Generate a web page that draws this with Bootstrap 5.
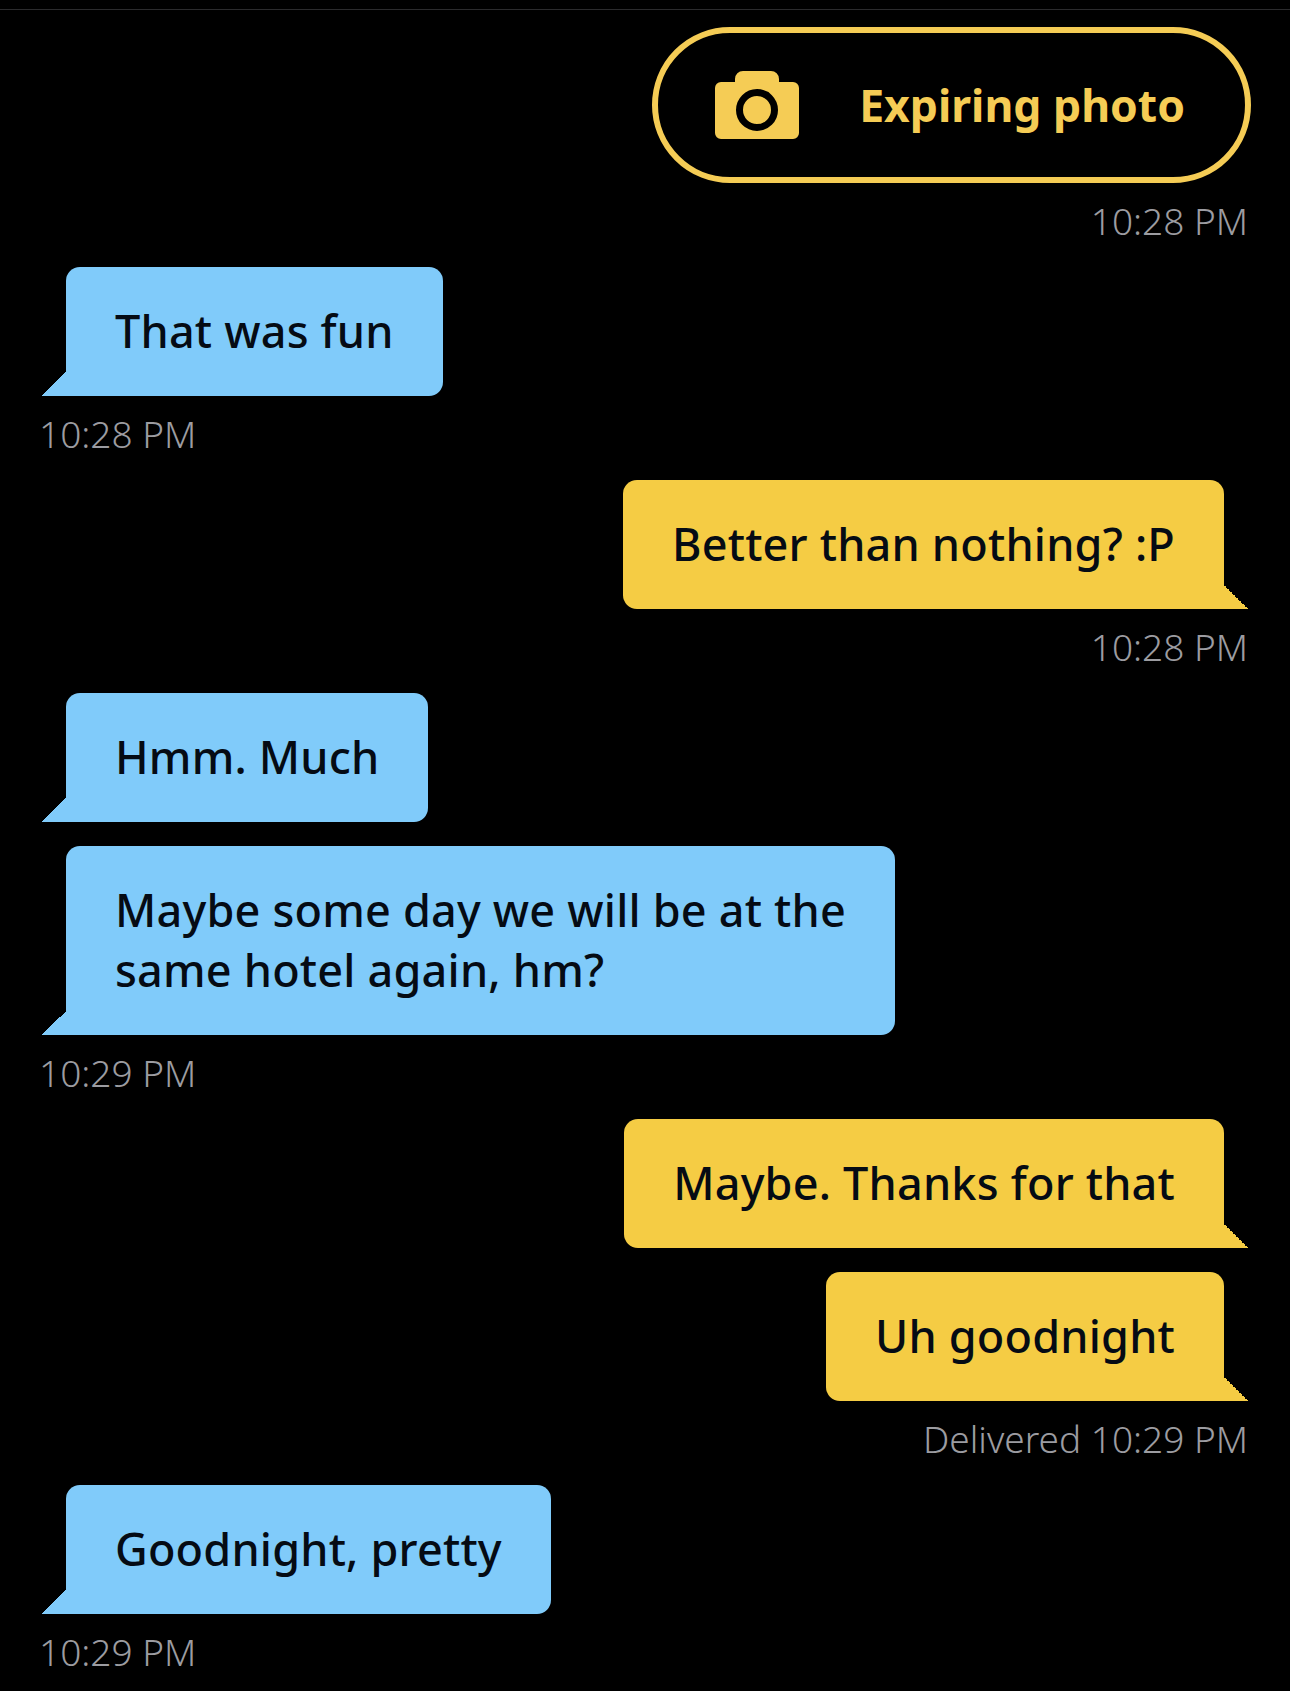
<!DOCTYPE html>
<html lang="en">
<head>
    <meta charset="utf-8">
    <meta name="viewport" content="width=device-width, initial-scale=1.0">
    <title>Chat</title>
    <link href="https://cdn.jsdelivr.net/npm/bootstrap@5.3.0/dist/css/bootstrap.min.css" rel="stylesheet">
    <style>
        body { background: #000; font-family: "Noto Sans", "Liberation Sans", sans-serif; }
        .top-rule { height: 1px; margin-top: 9px; background: #2b2b2d; }
        .thread { padding: 17px 42px 0; }
        .photo-pill { height: 156px; margin-right: -3px; padding: 0 60px 0 57px; gap: 60px; border: 6px solid #f5cc55; color: #f5cc55; font-size: 44.5px; font-weight: 700; }
        .cam-icon { width: 84px; height: 68px; }
        .bubble { position: relative; padding: 34px 49px 35px; font-size: 45px; font-weight: 500; letter-spacing: .2px; line-height: 60px; color: #050b14; border-radius: 14px; }
        .bubble::after { content: ""; position: absolute; bottom: 0; width: 24px; height: 24px; }
        .bubble-in { margin-left: 24px; background: #80cbfa; border-bottom-left-radius: 0; }
        .bubble-in::after { left: -24px; background: linear-gradient(to bottom right, transparent 50%, #80cbfa 50%); }
        .bubble-out { margin-right: 24px; background: #f5cc44; border-bottom-right-radius: 0; }
        .bubble-out::after { right: -24px; background: linear-gradient(to bottom left, transparent 50%, #f5cc44 50%); }
        .gap-same { margin-bottom: 24px; }
        .stamp { margin-top: 16px; margin-bottom: 24px; font-size: 37px; line-height: 44px; font-weight: 300; color: #9c9ca1; }
        .stamp-in { margin-left: -3px; }
    </style>
</head>
<body>
    <div class="top-rule"></div>
    <div class="thread d-flex flex-column">
        <div class="d-flex justify-content-end">
            <div class="photo-pill d-flex align-items-center rounded-pill">
                <svg class="cam-icon" viewBox="0 0 84 68" aria-hidden="true">
                    <path fill="currentColor" d="M20 11V8a8 8 0 0 1 8-8h28a8 8 0 0 1 8 8v3h14a6 6 0 0 1 6 6v45a6 6 0 0 1-6 6H6a6 6 0 0 1-6-6V17a6 6 0 0 1 6-6z"/>
                    <circle cx="42" cy="39" r="17.5" fill="none" stroke="#000" stroke-width="7"/>
                </svg>
                <span>Expiring photo</span>
            </div>
        </div>
        <div class="stamp text-end">10:28 PM</div>

        <div class="d-flex"><div class="bubble bubble-in">That was fun</div></div>
        <div class="stamp stamp-in">10:28 PM</div>

        <div class="d-flex justify-content-end"><div class="bubble bubble-out">Better than nothing? :P</div></div>
        <div class="stamp text-end">10:28 PM</div>

        <div class="d-flex gap-same"><div class="bubble bubble-in">Hmm. Much</div></div>
        <div class="d-flex"><div class="bubble bubble-in">Maybe some day we will be at the<br>same hotel again, hm?</div></div>
        <div class="stamp stamp-in">10:29 PM</div>

        <div class="d-flex justify-content-end gap-same"><div class="bubble bubble-out">Maybe. Thanks for that</div></div>
        <div class="d-flex justify-content-end"><div class="bubble bubble-out">Uh goodnight</div></div>
        <div class="stamp text-end">Delivered 10:29 PM</div>

        <div class="d-flex"><div class="bubble bubble-in">Goodnight, pretty</div></div>
        <div class="stamp stamp-in">10:29 PM</div>
    </div>
    <script src="https://cdn.jsdelivr.net/npm/bootstrap@5.3.0/dist/js/bootstrap.bundle.min.js"></script>
</body>
</html>
